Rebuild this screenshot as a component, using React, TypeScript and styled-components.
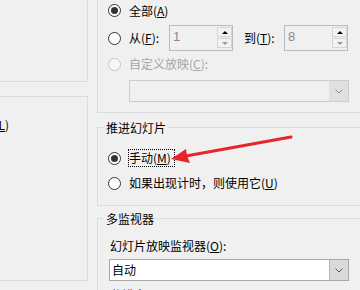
import React from 'react';
import styled, { createGlobalStyle } from 'styled-components';

const GlobalStyle = createGlobalStyle`
  html, body {
    margin: 0;
    padding: 0;
    background: #f0f0f0;
  }
  body {
    width: 360px;
    height: 290px;
    overflow: hidden;
    font-family: "Noto Sans CJK SC", "Microsoft YaHei", sans-serif;
    font-size: 12px;
    color: #000;
  }
`;

const Dialog = styled.div`
  position: relative;
  display: flex;
  width: 360px;
  height: 290px;
  overflow: hidden;
`;

const LeftColumn = styled.div`
  flex: none;
  width: 248px;
  margin-left: -160px;
  display: flex;
  flex-direction: column;
  gap: 14px;
`;

const Panel = styled.div<{ $mt?: number; $height: number }>`
  box-sizing: border-box;
  margin-top: ${(p) => p.$mt ?? 0}px;
  height: ${(p) => p.$height}px;
  border: 1px solid #dcdcdc;
  padding-top: 20px;
`;

const CutOption = styled.div`
  display: flex;
  justify-content: flex-end;
  padding-right: 78px;
  line-height: 16px;
  white-space: nowrap;
`;

const RightColumn = styled.div`
  flex: none;
  width: 300px;
  margin-left: 9px;
  display: flex;
  flex-direction: column;
`;

const RangeGroup = styled.div`
  margin-top: -30px;
  padding: 29px 0 10px 10px;
  border: 1px solid #dcdcdc;
  display: flex;
  flex-direction: column;
`;

const Group = styled.fieldset<{ $mt: number; $pl: number; $pt: number; $pb: number }>`
  margin: ${(p) => p.$mt}px 0 0 0;
  padding: ${(p) => p.$pt}px 0 ${(p) => p.$pb}px ${(p) => p.$pl}px;
  border: 1px solid #dcdcdc;
  min-width: 0;
  display: flex;
  flex-direction: column;
`;

const Legend = styled.legend<{ $ml: number }>`
  margin-left: ${(p) => p.$ml}px;
  padding: 0 2px;
  line-height: 17px;
  font-size: 12px;
`;

const Row = styled.div<{ $height: number; $mt?: number }>`
  display: flex;
  align-items: center;
  height: ${(p) => p.$height}px;
  margin-top: ${(p) => p.$mt ?? 0}px;
  white-space: nowrap;
`;

const RadioCircle = styled.span<{ $checked?: boolean; $disabled?: boolean }>`
  flex: none;
  box-sizing: border-box;
  width: 13px;
  height: 13px;
  border-radius: 50%;
  border: 1px solid ${(p) => (p.$disabled ? '#c4c4c4' : '#333')};
  background: ${(p) => (p.$disabled ? '#f7f7f7' : '#fff')};
  display: flex;
  align-items: center;
  justify-content: center;
  margin-right: 8px;

  &::after {
    content: '';
    display: ${(p) => (p.$checked ? 'block' : 'none')};
    width: 7px;
    height: 7px;
    border-radius: 50%;
    background: #333;
  }
`;

const Label = styled.span<{ $disabled?: boolean; $focused?: boolean; $width?: number }>`
  color: ${(p) => (p.$disabled ? '#a6a6a6' : '#000')};
  line-height: 16px;
  ${(p) => (p.$width ? `width: ${p.$width}px; flex: none;` : '')}
  ${(p) => (p.$focused ? 'outline: 1px dotted #000; outline-offset: 0px; padding-right: 3px;' : '')}
`;

const Spin = styled.div`
  box-sizing: border-box;
  flex: none;
  width: 64px;
  height: 26px;
  border: 1px solid #bcbcbc;
  background: #f0f0f0;
  display: flex;
`;

const SpinValue = styled.span`
  flex: 1;
  padding-left: 3px;
  padding-top: 2px;
  color: #8a8a8a;
  font-family: "Liberation Sans", Arial, sans-serif;
  font-size: 13px;
  line-height: 18px;
`;

const SpinButtons = styled.div`
  display: flex;
  flex-direction: column;
  gap: 1px;
  padding: 1px 0 0 0;
  margin-right: 0;
`;

const SpinButton = styled.span<{ $dir: 'up' | 'down' }>`
  box-sizing: border-box;
  width: 15px;
  height: 10px;
  border: 1px solid #d4d4d4;
  background: #f2f2f2;
  display: flex;
  align-items: center;
  justify-content: center;

  &::after {
    content: '';
    width: 0;
    height: 0;
    border-left: 3px solid transparent;
    border-right: 3px solid transparent;
    ${(p) =>
      p.$dir === 'up'
        ? 'border-bottom: 3px solid #000;'
        : 'border-top: 3px solid #9a9a9a;'}
  }
`;

const Combo = styled.div<{ $disabled?: boolean; $ml: number; $width: number; $mt?: number }>`
  box-sizing: border-box;
  margin-left: ${(p) => p.$ml}px;
  margin-top: ${(p) => p.$mt ?? 0}px;
  width: ${(p) => p.$width}px;
  height: 22px;
  border: 1px solid ${(p) => (p.$disabled ? '#cccccc' : '#a8a8a8')};
  background: ${(p) => (p.$disabled ? '#f0f0f0' : '#fff')};
  display: flex;
`;

const ComboText = styled.span`
  flex: 1;
  padding-left: 2px;
  line-height: 20px;
`;

const ComboButton = styled.span<{ $disabled?: boolean }>`
  box-sizing: border-box;
  flex: none;
  width: 19px;
  background: ${(p) => (p.$disabled ? '#e0e0e0' : '#dadada')};
  border-left: 1px solid ${(p) => (p.$disabled ? '#e0e0e0' : '#b4b4b4')};
  display: flex;
  align-items: center;
  justify-content: center;
`;

const FieldLabel = styled.div<{ $mt?: number }>`
  padding-left: 1px;
  margin-top: ${(p) => p.$mt ?? 0}px;
  line-height: 16px;
  white-space: nowrap;
`;

const Annotation = styled.svg`
  position: absolute;
  left: 0;
  top: 0;
  pointer-events: none;
`;

const Chevron = ({ color }: { color: string }) => (
  <svg width="8" height="5" viewBox="0 0 8 5">
    <polyline points="0.5,0.5 4,4 7.5,0.5" fill="none" stroke={color} strokeWidth="1" />
  </svg>
);

const SpinBox = ({ value }: { value: string }) => (
  <Spin>
    <SpinValue>{value}</SpinValue>
    <SpinButtons>
      <SpinButton $dir="up" />
      <SpinButton $dir="down" />
    </SpinButtons>
  </Spin>
);

const App: React.FC = () => {
  return (
    <>
      <GlobalStyle />
      <Dialog>
        <LeftColumn>
          <Panel $mt={-20} $height={102} />
          <Panel $height={185}>
            <CutOption>
              循环放映，按 ESC 键终止(<u>L</u>)
            </CutOption>
          </Panel>
        </LeftColumn>

        <RightColumn>
          <RangeGroup>
            <Row $height={21}>
              <RadioCircle $checked />
              <Label>
                全部(<u>A</u>)
              </Label>
            </Row>
            <Row $height={26} $mt={4}>
              <RadioCircle />
              <Label $width={40}>
                从(<u>F</u>):
              </Label>
              <SpinBox value="1" />
              <Label $width={40} style={{ marginLeft: 11 }}>
                到(<u>T</u>):
              </Label>
              <SpinBox value="8" />
            </Row>
            <Row $height={18} $mt={4}>
              <RadioCircle $disabled />
              <Label $disabled>
                自定义放映(<u>C</u>):
              </Label>
            </Row>
            <Combo $disabled $ml={21} $width={220} $mt={7}>
              <ComboText />
              <ComboButton $disabled>
                <Chevron color="#8a8a8a" />
              </ComboButton>
            </Combo>
          </RangeGroup>

          <Group $mt={6} $pl={10} $pt={13} $pb={13}>
            <Legend $ml={-4}>推进幻灯片</Legend>
            <Row $height={18}>
              <RadioCircle $checked />
              <Label $focused>
                手动(<u>M</u>)
              </Label>
            </Row>
            <Row $height={18} $mt={7}>
              <RadioCircle />
              <Label>
                如果出现计时，则使用它(<u>U</u>)
              </Label>
            </Row>
          </Group>

          <Group $mt={4} $pl={11} $pt={11} $pb={10}>
            <Legend $ml={-5}>多监视器</Legend>
            <FieldLabel>
              幻灯片放映监视器(<u>O</u>):
            </FieldLabel>
            <Combo $ml={0} $width={240} $mt={5}>
              <ComboText>自动</ComboText>
              <ComboButton>
                <Chevron color="#555" />
              </ComboButton>
            </Combo>
            <FieldLabel $mt={6}>
              分辨率(<u>R</u>):
            </FieldLabel>
          </Group>
        </RightColumn>

        <Annotation width="360" height="290" viewBox="0 0 360 290">
          <line x1="291" y1="137" x2="186" y2="156" stroke="#e5252a" strokeWidth="3" strokeLinecap="round" />
          <polygon points="171,159 190,163 187,155.5 186,149" fill="#e5252a" />
        </Annotation>
      </Dialog>
    </>
  );
};

export default App;
